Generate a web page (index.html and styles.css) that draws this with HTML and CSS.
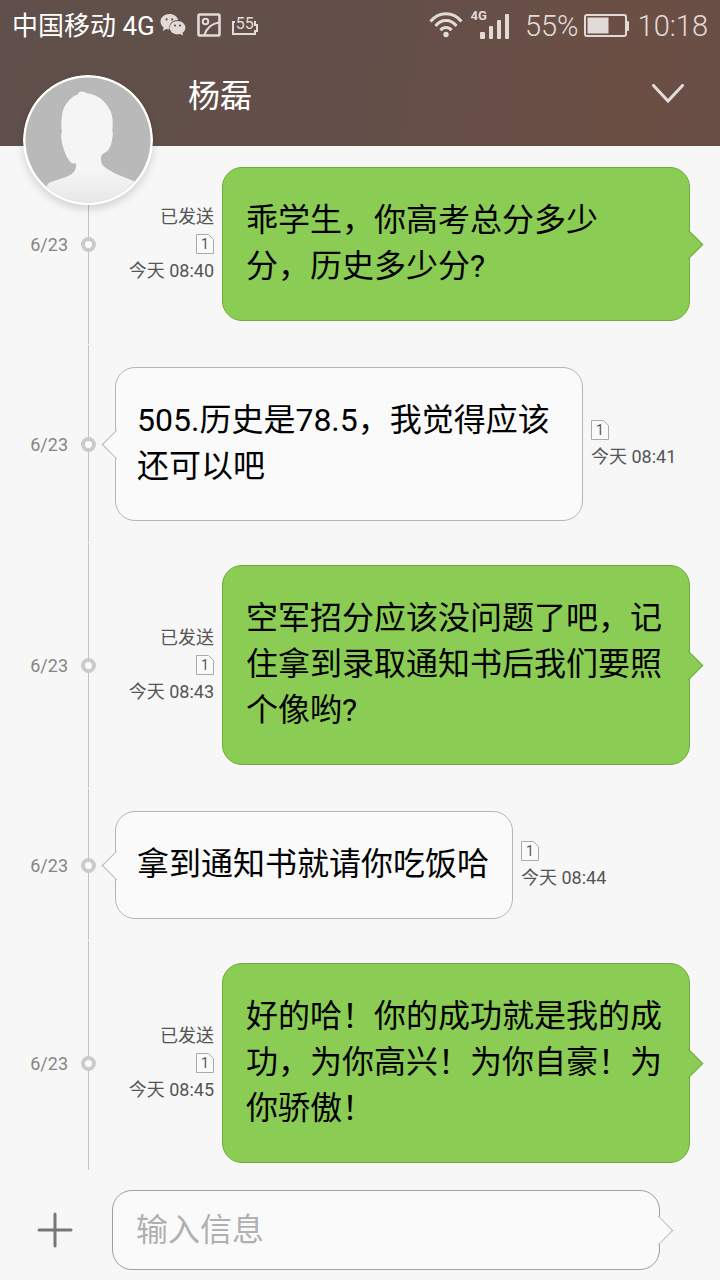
FILE: index.html
```html
<!DOCTYPE html>
<html lang="zh-CN">
<head>
<meta charset="utf-8">
<meta name="viewport" content="width=device-width, initial-scale=1">
<title>杨磊</title>
<link rel="stylesheet" href="styles.css">
</head>
<body>
<div class="app">
  <header class="header">
    <div class="status">
      <span class="carrier">中国移动 4G</span>
      <svg class="ico-wechat" width="26" height="24" viewBox="0 0 26 24" aria-hidden="true">
        <path fill="#e2dad7" d="M9.500 1C4.500 1 .5 4.300.5 8.600c0 2.400 1.200 4.500 3.100 5.900L2.800 18l3.600-1.900c1 .3 2 .5 3.200.5C8.300 11 12.300 7 18.200 7.100 17.300 3.500 13.800 1 9.500 1z"/>
        <path fill="#e2dad7" d="M17.500 8.100c-4.300 0-7.700 2.900-7.700 6.600s3.400 6.600 7.700 6.600c.9 0 1.800-.1 2.600-.4l3.100 1.600-.7-2.700c1.800-1.200 2.900-3.100 2.900-5.100 0-3.700-3.500-6.600-7.900-6.600z"/>
        <g fill="#62504a"><circle cx="6.600" cy="6.400" r="1.100"/><circle cx="12.200" cy="6.400" r="1.100"/><circle cx="15" cy="12.500" r="1.100"/><circle cx="20" cy="12.500" r="1.100"/></g>
      </svg>
      <svg class="ico-picture" width="24" height="24" viewBox="0 0 24 24" fill="none" stroke="#e2dad7" aria-hidden="true">
        <rect x="1.500" y="1.500" width="21" height="21" rx="1" stroke-width="2.600"/>
        <circle cx="8.500" cy="8.500" r="2.800" stroke-width="2"/>
        <path d="M7.500 22C9.500 15.500 15 10.500 22 9.500" stroke-width="2.200"/>
      </svg>
      <span class="badge-battery">
        <svg width="26" height="14" viewBox="0 0 26 14" fill="none" stroke="#e2dad7" stroke-width="2" aria-hidden="true"><path d="M3 1H1v12h22v-3h2V4h-2V1h-1"/></svg>
        <b>55</b>
      </span>
      <span class="spacer"></span>
      <svg class="ico-wifi" width="34" height="26" viewBox="0 0 34 26" fill="none" stroke="#e2dad7" stroke-width="3" aria-hidden="true">
        <path d="M1.500 9.500C10-.8 24-.8 32.500 9.500"/>
        <path d="M6.500 14C12.500 6.800 21.500 6.800 27.500 14"/>
        <path d="M11.500 18.300c3-3.700 8-3.700 11 0"/>
        <circle cx="17" cy="22.500" r="2.700" fill="#e2dad7" stroke="none"/>
      </svg>
      <span class="signal">
        <span class="signal-type">4G</span>
        <svg width="30" height="25" viewBox="0 0 30 25" fill="#e2dad7" aria-hidden="true">
          <rect x="0" y="18" width="5" height="7" rx="1"/><rect x="9" y="12" width="4" height="13" rx="1"/><rect x="17" y="6" width="4" height="19" rx="1"/><rect x="25" y="0" width="4" height="25" rx="1"/>
        </svg>
      </span>
      <span class="percent">55%</span>
      <svg class="ico-battery" width="46" height="23" viewBox="0 0 46 23" aria-hidden="true">
        <rect x="1" y="1" width="41" height="21" rx="2" fill="none" stroke="#e2dad7" stroke-width="2"/>
        <rect x="3.500" y="3.500" width="21" height="16" fill="#e2dad7"/>
        <rect x="42" y="7" width="3" height="10" rx="1" fill="#e2dad7"/>
      </svg>
      <time class="clock">10:18</time>
    </div>
    <div class="titlebar">
      <h1 class="name">杨磊</h1>
      <button class="expand" type="button" aria-label="展开">
        <svg width="32" height="20" viewBox="0 0 32 20" fill="none" stroke="#e4dcd9" stroke-width="3" stroke-linecap="round"><path d="M1.500 1.500 16 17 30.500 1.500"/></svg>
      </button>
    </div>
    <svg class="avatar" viewBox="0 0 130 130" role="img" aria-label="头像">
      <defs>
        <clipPath id="face"><circle cx="65" cy="65" r="62.500"/></clipPath>
        <linearGradient id="skin" x1="0" y1="0" x2="0" y2="1"><stop offset="0.700" stop-color="#f5f5f5"/><stop offset="1" stop-color="#e6e6e6"/></linearGradient>
      </defs>
      <circle cx="65" cy="65" r="65" fill="#fff"/>
      <g clip-path="url(#face)">
        <rect width="130" height="130" fill="#b9b9b9"/>
        <path fill="url(#skin)" d="M56 19 54.500 18.500 57 16.700Q61 16 64.300 18.300 73 20 78.700 24.300 84 29 87 35 90 41 89.700 50L89.300 56Q90.500 58 89 65C88 71 86 75 83 77Q78 79 78 83 78 89 80.300 91 85 95 93.700 99.300L112 106.500V130H20L23.700 111Q24.500 108 28.700 106.700L43.700 101.700Q50 99 51.700 95.700 53.500 93 53 88.500 49 89 47 86.700 43 82 41 75 37.500 66 38.300 58.300 39.500 56 38.500 54 38 47 39 40 40 33 43.700 28.300 49 21 56 19z"/>
      </g>
    </svg>
  </header>

  <main class="thread">
    <article class="row sent first">
      <time class="date">6/23</time><span class="dot"></span>
      <div class="meta"><span>已发送</span><span class="sim"><svg width="18" height="20" viewBox="0 0 18 20"><path d="M.5.500h12l5 5v14H.5z"/></svg><b>1</b></span><span>今天 08:40</span></div>
      <p class="bubble">乖学生，你高考总分多少<br>分，历史多少分?</p>
    </article>
    <article class="row received">
      <time class="date">6/23</time><span class="dot"></span>
      <p class="bubble wide">505.历史是78.5，我觉得应该<br>还可以吧</p>
      <div class="meta"><span class="sim"><svg width="18" height="20" viewBox="0 0 18 20"><path d="M.5.500h12l5 5v14H.5z"/></svg><b>1</b></span><span>今天 08:41</span></div>
    </article>
    <article class="row sent">
      <time class="date">6/23</time><span class="dot"></span>
      <div class="meta"><span>已发送</span><span class="sim"><svg width="18" height="20" viewBox="0 0 18 20"><path d="M.5.500h12l5 5v14H.5z"/></svg><b>1</b></span><span>今天 08:43</span></div>
      <p class="bubble">空军招分应该没问题了吧，记住拿到录取通知书后我们要照个像哟?</p>
    </article>
    <article class="row received">
      <time class="date">6/23</time><span class="dot"></span>
      <p class="bubble">拿到通知书就请你吃饭哈</p>
      <div class="meta"><span class="sim"><svg width="18" height="20" viewBox="0 0 18 20"><path d="M.5.500h12l5 5v14H.5z"/></svg><b>1</b></span><span>今天 08:44</span></div>
    </article>
    <article class="row sent last">
      <time class="date">6/23</time><span class="dot"></span>
      <div class="meta"><span>已发送</span><span class="sim"><svg width="18" height="20" viewBox="0 0 18 20"><path d="M.5.500h12l5 5v14H.5z"/></svg><b>1</b></span><span>今天 08:45</span></div>
      <p class="bubble">好的哈！你的成功就是我的成功，为你高兴！为你自豪！为你骄傲！</p>
    </article>
  </main>

  <form class="composer">
    <button class="add" type="button" aria-label="添加附件">
      <svg width="36" height="36" viewBox="0 0 36 36" stroke="#777" stroke-width="3" stroke-linecap="round"><path d="M18 2v32M2 18h32"/></svg>
    </button>
    <div class="field"><input class="message" type="text" placeholder="输入信息" aria-label="输入信息"></div>
  </form>
</div>
</body>
</html>
```
FILE: styles.css
```css
* { box-sizing: border-box; }

body {
  margin: 0;
  background: #f7f7f7;
  color: #000;
  font-family: Roboto, "Noto Sans CJK SC", sans-serif;
}

button {
  padding: 0;
  border: 0;
  background: none;
}

svg { display: block; flex: none; }

.app {
  display: flex;
  flex-direction: column;
  min-height: 100vh;
}

/* Header */
.header {
  position: relative;
  z-index: 1;
  height: 146px;
  background: linear-gradient(100deg, #604f4a 0%, #634f49 50%, #6b4f45 85%, #694e45 100%);
}

.status {
  display: flex;
  align-items: center;
  height: 50px;
  padding: 0 12px;
  color: #e2dad7;
}

.carrier {
  padding-bottom: 4px;
  color: #fff;
  font-size: 26px;
}
.ico-wechat { margin-left: 5px; }
.ico-picture { margin-left: 11px; }

.badge-battery {
  display: grid;
  margin-left: 11px;
  justify-items: center;
  align-items: end;
}
.badge-battery svg, .badge-battery b { grid-area: 1 / 1; }
.badge-battery b {
  padding-bottom: 3px;
  font-size: 16px;
  font-weight: 400;
  line-height: 16px;
}

.spacer { flex: 1; }

.signal {
  display: flex;
  align-items: flex-start;
  margin-left: 8px;
}
.signal svg { margin: 3px 0 0 -7px; }
.signal-type { font-size: 13px; font-weight: 700; line-height: 10px; }

.percent, .clock { padding-top: 2px; font-size: 29px; font-weight: 300; }
.percent { margin-left: 15px; }
.ico-battery { margin-left: 5px; }
.clock { margin-left: 8px; }

.titlebar {
  display: flex;
  align-items: center;
  justify-content: space-between;
  height: 88px;
  padding: 0 36px 0 188px;
}
.name {
  margin: 0;
  padding-bottom: 2px;
  color: #fff;
  font-size: 32px;
  font-weight: 400;
}

.avatar {
  position: absolute;
  top: 75px;
  left: 23px;
  width: 130px;
  height: 130px;
  border-radius: 50%;
  box-shadow: 0 4px 8px rgba(0, 0, 0, 0.15);
}

/* Conversation */
.thread { flex: 1; }

.row {
  position: relative;
  display: flex;
  align-items: center;
  padding: 22px 30px 22px 0;
}
.row.sent { padding-bottom: 24px; }
.row.first { padding-top: 21px; }
.row.last { padding-bottom: 8px; }

.row::before {
  content: "";
  position: absolute;
  top: 0;
  bottom: 1px;
  left: 88px;
  width: 1px;
  background: #c4c4c4;
}

.date {
  width: 68px;
  color: #868686;
  font-size: 18px;
  text-align: right;
}

.dot {
  position: relative;
  flex: none;
  width: 15px;
  height: 15px;
  margin-left: 13px;
  border: 4px solid #cbcbcb;
  border-radius: 50%;
  background: #fafafa;
}

.meta {
  display: flex;
  flex: 1;
  flex-direction: column;
  gap: 3px;
  color: #555;
  font-size: 18px;
  line-height: 24px;
  white-space: nowrap;
}
.sent .meta { align-items: flex-end; margin-right: 8px; }
.received .meta { margin-left: 8px; padding-bottom: 2px; }

.sim {
  display: grid;
  width: 18px;
  height: 24px;
  align-items: center;
}
.sim svg, .sim b { grid-area: 1 / 1; }
.sim path { fill: #fafafa; stroke: #aaa; }
.sim b {
  font-size: 14px;
  font-weight: 400;
  text-align: center;
}

.bubble {
  position: relative;
  margin: 0;
  padding: 29px 23px 31px 21px;
  border: 1px solid #b5b5b5;
  border-radius: 20px;
  background: #fafafa;
  font-size: 32px;
  line-height: 46px;
}
.sent .bubble {
  flex: none;
  width: 65vw;
  padding: 29px 26px 31px 23px;
  border-color: #6dac3d;
  background: #8bcc54;
}
.received .bubble { margin-left: 19px; }
.received .wide { width: 65vw; }

.bubble::after, .field::after {
  content: "";
  position: absolute;
  top: calc(50% - 10px);
  width: 20px;
  height: 20px;
  border: solid #b5b5b5;
  border-width: 1px 1px 0 0;
  background: #fafafa;
  transform: rotate(45deg);
}
.sent .bubble::after {
  right: -10px;
  border-color: #6dac3d;
  background: #8bcc54;
}
.received .bubble::after {
  left: -10px;
  border-width: 0 0 1px 1px;
}

/* Composer */
.composer {
  display: flex;
  align-items: center;
  padding: 19px 60px 10px 37px;
}
.add { margin-right: 39px; }

.field {
  position: relative;
  flex: 1;
}
.field::after { right: -9px; border-color: #bbb; }

.message {
  display: block;
  width: 100%;
  height: 80px;
  padding: 0 23px;
  border: 1px solid #a0a0a0;
  border-radius: 20px;
  background: #fafafa;
  color: #000;
  font: inherit;
  font-size: 32px;
}
.message::placeholder { color: #b0b0b0; }
```
